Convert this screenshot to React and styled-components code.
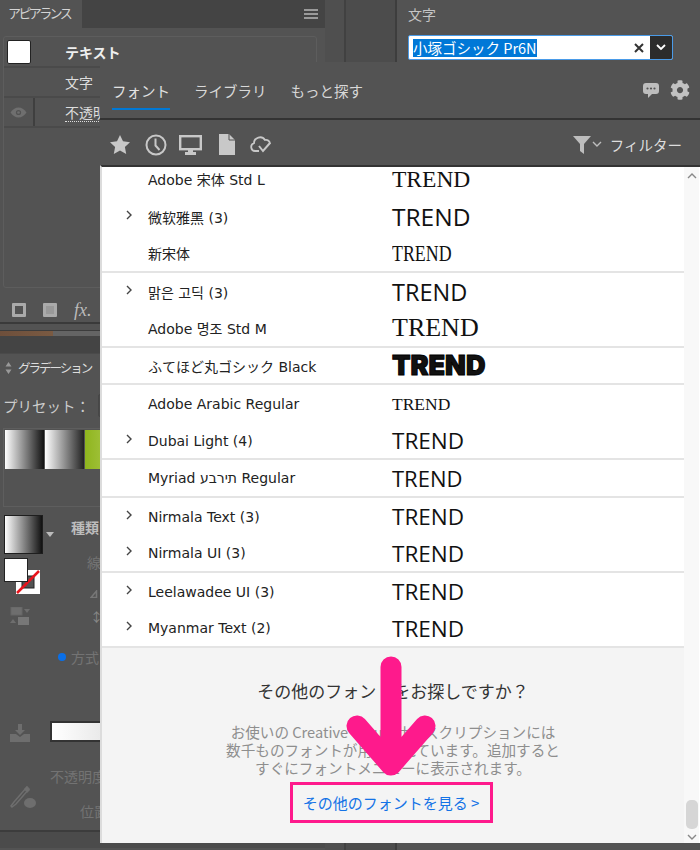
import React from "react";
import styled, { createGlobalStyle } from "styled-components";
import { FaCog } from "react-icons/fa";

const UI = '"Noto Sans CJK JP", "Noto Sans", sans-serif';
const Global = createGlobalStyle`
  html, body { margin: 0; padding: 0; background: #535353; }
  * { box-sizing: border-box; }
`;

const Page = styled.div`
  position: relative; width: 700px; height: 850px; overflow: hidden;
  display: flex; background: #535353; font-family: ${UI}; color: #ddd;
`;
const LeftColumn = styled.div`width: 325px; flex: none; display: flex; flex-direction: column;`;
const Gutter = styled.div`width: 21px; flex: none; background: #4f4f4f; border-right: 2px solid #414141;`;
const MiddleColumn = styled.div`width: 51px; flex: none; background: #4c4c4c; border-right: 2px solid #3d3d3d;`;
const RightColumn = styled.div`flex: 1; padding: 3px 27px 0 11px;`;

const Appearance = styled.section`height: 324px; display: flex; flex-direction: column; border-bottom: 2px solid #3a3a3a;`;
const TabBar = styled.div`height: 28px; flex: none; display: flex; background: #444; justify-content: space-between; align-items: center;`;
const Tab = styled.div`width: 82px; height: 28px; background: #535353; font-size: 13px; letter-spacing: -2.6px; line-height: 25px; padding-left: 8px; color: #d4d4d4; white-space: nowrap;`;
const Menu = styled.div`width: 14px; height: 10px; margin-right: 7px; border-top: 2px solid #9a9a9a; border-bottom: 2px solid #9a9a9a; position: relative;
  &::after { content: ""; display: block; height: 2px; margin-top: 2px; background: #9a9a9a; }`;
const Frame = styled.div`flex: 1; margin: 8px 8px 10px 3px; border: 1px solid #5d5d5d; border-radius: 3px;`;
const ItemRow = styled.div`height: ${p => p.$h}px; display: flex; align-items: center; border-bottom: 2px solid #4a4a4a; position: relative;`;
const WhiteSwatch = styled.div`width: 24px; height: 24px; margin-left: 3px; background: #fff; border: 1px solid #222; border-radius: 2px; flex: none;`;
const ItemLabel = styled.div`position: absolute; left: 61px; font-size: 14px; font-weight: ${p => p.$bold ? 700 : 400}; color: ${p => p.$bold ? "#eee" : "#ddd"};
  ${p => p.$dotted && "border-bottom: 1px dotted #ddd; line-height: 18px;"}`;
const EyeCell = styled.div`width: 31px; height: 100%; border-right: 2px solid #3f3f3f; display: flex; align-items: center; justify-content: center; flex: none;`;
const PanelTools = styled.div`display: flex; align-items: center; gap: 17px; padding: 0 0 0 12px; height: 24px; flex: none; margin-bottom: 0;`;
const SquareTool = styled.div`width: 14px; height: 14px; border: 3px solid #aaa; background: ${p => p.$fill ? "#999" : "transparent"}; border-radius: 1px;`;
const FxTool = styled.div`font-family: "Liberation Serif", serif; font-style: italic; font-size: 18px; color: #bbb; line-height: 20px;`;

const Strip = styled.div`height: 6px; margin-top: 6px; background: linear-gradient(90deg, #6e4f3b 0, #7a5a42 53px, #646464 53px); border-top: 1px solid #3c3c3c;`;
const DarkBand = styled.div`height: 17px; background: #444; flex: none;`;

const Gradient = styled.section`flex: 1; display: flex; flex-direction: column; border-top: 1px solid #4a4a4a;`;
const GradientHead = styled.div`height: 27px; display: flex; align-items: center; gap: 5px; padding-left: 2px; font-size: 12.5px; letter-spacing: -2px; color: #ddd; white-space: nowrap;`;
const PresetRow = styled.div`height: 47px; padding-top: 2px; display: flex; align-items: center; gap: 8px; padding-left: 3px; font-size: 14.5px; color: #ccc; white-space: nowrap;`;
const PresetInput = styled.div`width: 40px; height: 23px; flex: none; background: #4a4a4a; border: 1px solid #474747; border-radius: 2px;`;
const SwatchFrame = styled.div`height: 79px; margin-left: 3px; border: 1px solid #5e5e5e; padding: 1px; display: flex; align-items: flex-start; gap: 1px;`;
const Preset = styled.div`width: 39px; height: 39px; flex: none; background: ${p => p.$bg};`;
const TypeRow = styled.div`height: 38px; margin-top: 8px; display: flex; padding-left: 4px;`;
const GradPreview = styled.div`width: 39px; height: 39px; flex: none; background: linear-gradient(90deg,#fff,#111); border: 1px solid #1e1e1e;`;
const Caret = styled.div`width: 0; height: 0; margin: 17px 0 0 3px; border: 4px solid transparent; border-top: 5px solid #bbb; border-bottom: 0;`;
const Label = styled.div`margin: ${p => p.$m}; font-size: ${p => p.$s || 14}px; font-weight: ${p => p.$w || 400}; color: ${p => p.$c || "#737373"}; white-space: nowrap; line-height: 18px;`;
const StrokeRow = styled.div`height: 38px; margin-top: 5px; display: flex; padding-left: 4px;`;
const SwatchStack = styled.div`position: relative; width: 36px; height: 36px; flex: none;`;
const FillSwatch = styled.div`position: absolute; left: 0; top: 0; width: 24px; height: 24px; background: #fff; border: 1px solid #222; z-index: 1;`;
const StrokeSwatch = styled.svg`position: absolute; left: 12px; top: 12px;`;
const SwapRow = styled.div`height: 39px; display: flex; align-items: flex-start; padding: 11px 0 0 10px; gap: 60px;`;
const StackedAngle = styled.div`display: flex; flex-direction: column; align-items: flex-start; margin-top: -17px; gap: 10px;`;
const MethodRow = styled.div`height: 82px; display: flex; align-items: flex-start; padding: 13px 0 0 58px; gap: 5px;`;
const BlueDot = styled.div`width: 8px; height: 8px; margin-top: 5px; border-radius: 50%; background: #0a6fe8; flex: none;`;
const SliderRow = styled.div`height: 46px; margin-top: 4px; padding-left: 10px; display: flex; align-items: flex-start; gap: 20px;`;
const SliderBar = styled.div`flex: 1; height: 21px; background: linear-gradient(90deg, #fff, #888 100%); border: 2px solid #333; border-right: 0;`;
const EyeDropRow = styled.div`height: 44px; display: flex; padding: 1px 0 0 10px;`;
const BottomEdge = styled.div`height: 18px; margin-top: 1px; border-top: 2px solid #3c3c3c; background: #4b4b4b;`;

const FieldCaption = styled.div`font-size: 14px; color: #c4c4c4; line-height: 22px;`;
const Combo = styled.div`margin-top: 10px; height: 25px; display: flex; align-items: stretch; background: #fff; border: 1px solid #4a9be8; border-radius: 2px; overflow: hidden;`;
const ComboText = styled.div`flex: 1; padding: 3px 0 0 4px; font-size: 14.5px; line-height: 18px;`;
const Selected = styled.span`background: #0078d7; color: #fff; display: inline-block; white-space: nowrap;`;
const ComboClear = styled.div`width: 22px; display: flex; align-items: center; justify-content: center;`;
const ComboDrop = styled.div`width: 22px; background: #2c2c2c; display: flex; align-items: center; justify-content: center;`;

const Popup = styled.div`
  position: absolute; left: 100px; top: 62px; width: 600px; height: 781px; z-index: 2;
  display: flex; flex-direction: column; background: #535353;
`;
const PopHead = styled.header`height: 58px; flex: none; display: flex; padding: 0 10px 0 12px; border-bottom: 2px solid #333; align-items: flex-start;`;
const PopTab = styled.div`margin: 17px 24px 0 0; height: 31px; font-size: 14.5px; line-height: 24px; color: ${p => p.$on ? "#e2e2e2" : "#d8d8d8"}; border-bottom: 2px solid ${p => p.$on ? "#0078d4" : "transparent"}; white-space: nowrap;`;
const HeadIcons = styled.div`margin: 18px 0 0 auto; display: flex; align-items: center; gap: 11px;`;
const Tools = styled.div`height: 45px; flex: none; display: flex; align-items: center; padding: 4px 18px 0 10px;`;
const ToolIcons = styled.div`display: flex; align-items: center; gap: 12px;`;
const FilterBox = styled.div`margin-left: auto; display: flex; align-items: center; font-size: 14.5px; color: #ddd; white-space: nowrap;`;
const Body = styled.div`flex: 1; min-height: 0; display: flex; flex-direction: column; border-top: 2px solid #333; background: #fff; border-left: 2px solid #dcdcdc; position: relative;`;
const ListArea = styled.div`flex: 1; display: flex; min-height: 0;`;
const Main = styled.div`flex: 1; display: flex; flex-direction: column; min-width: 0;`;
const RailSpace = styled.div`width: 16px; flex: none;`;
const List = styled.div`height: 481px; flex: none; overflow: hidden;`;
const Rows = styled.div`margin-top: -7px;`;
const Row = styled.div`height: 37.5px; padding-top: 1px; display: flex; align-items: center; ${p => p.$line && "border-bottom: 2px solid #e4e4e4;"}`;
const Chevron = styled.div`width: 46px; flex: none; padding-left: 23px; display: flex; align-items: center; height: 100%; padding-bottom: 4px;`;
const FontName = styled.div`width: 244px; flex: none; font-family: "DejaVu Sans", "Noto Sans CJK JP", sans-serif; font-size: 14px; color: #222; white-space: nowrap;`;
const Trend = styled.div`font-family: ${p => p.$f}; font-size: ${p => p.$s}px; font-weight: ${p => p.$w || 400}; color: #111; transform-origin: left center; transform: scaleX(${p => p.$x || 1}); white-space: nowrap; ${p => p.$stroke && "-webkit-text-stroke: 1px #000;"}`;
const Footer = styled.footer`height: 195px; flex: none; background: #f4f4f4; display: flex; flex-direction: column; align-items: center; padding-top: 30px;`;
const FooterTitle = styled.div`font-size: 17px; line-height: 25px; color: #333;`;
const FooterText = styled.div`margin-top: 20px; font-size: 14.6px; line-height: 18px; color: #8e8e8e; text-align: center; white-space: nowrap;`;
const LinkBox = styled.div`margin: 5px 4px 0 0; width: 203px; height: 41px; border: 3px solid #fe1a8c; display: flex; align-items: center; justify-content: center; font-size: 15px; color: #1473e6; white-space: nowrap;`;
const Scrollbar = styled.div`position: absolute; right: 1px; top: 0; bottom: 0; width: 15px; background: #f8f8f8; display: flex; flex-direction: column; align-items: center; justify-content: space-between; padding: 6px 0 3px;`;
const Thumb = styled.div`width: 12px; height: 29px; background: #d6d6d6; border-radius: 5px; margin-top: auto; margin-bottom: 5px;`;
const ArrowOverlay = styled.svg`position: absolute; left: 340px; top: 650px; z-index: 3; pointer-events: none;`;

const serif = '"Liberation Serif", serif';
const sans = '"Open Sans", sans-serif';
const rows = [
  { n: "Adobe 宋体 Std L", f: serif, s: 23.5 },
  { n: "微软雅黑 (3)", c: 1, f: sans, s: 24.5, w: 500 },
  { n: "新宋体", f: serif, s: 23.5, x: 0.76, line: 1 },
  { n: "맑은 고딕 (3)", c: 1, f: sans, s: 23.5 },
  { n: "Adobe 명조 Std M", f: serif, s: 26, line: 1 },
  { n: "ふてほど丸ゴシック Black", f: '"Inter", sans-serif', s: 27, w: 900, stroke: 1, line: 1 },
  { n: "Adobe Arabic Regular", f: serif, s: 17.5 },
  { n: "Dubai Light (4)", c: 1, f: sans, s: 22.5, line: 1 },
  { n: "Myriad תירבע Regular", f: sans, s: 22, line: 1 },
  { n: "Nirmala Text (3)", c: 1, f: sans, s: 22.5 },
  { n: "Nirmala UI (3)", c: 1, f: sans, s: 22.5, line: 1 },
  { n: "Leelawadee UI (3)", c: 1, f: sans, s: 22.5 },
  { n: "Myanmar Text (2)", c: 1, f: sans, s: 22.5, line: 1 },
];

const Chev = ({ d = "M2 1l4 4-4 4", c = "#444", w = 8, h = 10, sw = 1.4 }) => (
  <svg width={w} height={h} viewBox={`0 0 ${w} ${h}`}><path d={d} fill="none" stroke={c} strokeWidth={sw} /></svg>
);

export default function App() {
  return (
    <Page>
      <Global />
      <LeftColumn>
        <Appearance>
          <TabBar><Tab>アピアランス</Tab><Menu /></TabBar>
          <Frame>
            <ItemRow $h={31}><WhiteSwatch /><ItemLabel $bold>テキスト</ItemLabel></ItemRow>
            <ItemRow $h={30}><ItemLabel>文字</ItemLabel></ItemRow>
            <ItemRow $h={30}>
              <EyeCell>
                <svg width="17" height="11" viewBox="0 0 17 11"><path d="M.5 5.5C3 2 5.5.5 8.5.5s5.500 1.500 8 5c-2.500 3.500-5 5-8 5s-5.500-1.500-8-5z" fill="#6f6f6f" /><circle cx="8.500" cy="5.500" r="2.600" fill="#535353" /><circle cx="8.500" cy="5.500" r="1.300" fill="#6f6f6f" /></svg>
              </EyeCell>
              <ItemLabel $dotted>不透明度</ItemLabel>
            </ItemRow>
          </Frame>
          <PanelTools>
            <SquareTool /><SquareTool $fill /><FxTool>fx.</FxTool>
          </PanelTools>
        </Appearance>
        <Strip />
        <DarkBand />
        <Gradient>
          <GradientHead>
            <svg width="9" height="12" viewBox="0 0 9 12" style={{ flex: "none", marginLeft: 2 }}><path d="M4.500 0l3 4.500h-6zM4.500 12l-3-4.500h6z" fill="#999" /></svg>
            グラデーション
          </GradientHead>
          <PresetRow>プリセット：<PresetInput /></PresetRow>
          <SwatchFrame>
            <Preset $bg="linear-gradient(90deg,#fff,#111)" />
            <Preset $bg="linear-gradient(90deg,#fff,#222)" />
            <Preset $bg="linear-gradient(90deg,#8fb51e,#b4cf5a)" />
          </SwatchFrame>
          <TypeRow>
            <GradPreview /><Caret />
            <Label $m="3px 0 0 17px" $c="#bdbdbd" $w={700}>種類</Label>
          </TypeRow>
          <StrokeRow>
            <SwatchStack>
              <FillSwatch />
              <StrokeSwatch width="24" height="24" viewBox="0 0 24 24">
                <rect width="24" height="24" fill="#fff" />
                <rect x="6" y="6" width="12" height="12" fill="#535353" stroke="#222" />
                <path d="M1 23L23 1" stroke="#e8141c" strokeWidth="2.500" />
              </StrokeSwatch>
            </SwatchStack>
            <Label $m="-5px 0 0 47px">線</Label>
          </StrokeRow>
          <SwapRow>
            <svg width="20" height="18" viewBox="0 0 20 18" style={{ flex: "none" }}>
              <rect x="1" y="0" width="11" height="8" fill="#6e6e6e" stroke="#666" />
              <path d="M14 2h6l-3 4z" fill="#6e6e6e" />
              <rect x="8" y="10" width="11" height="8" fill="#777" />
              <path d="M0 16h6l-3-4z" fill="#6e6e6e" />
            </svg>
            <StackedAngle>
              <svg width="12" height="8" viewBox="0 0 12 8"><path d="M1 7.500L6.500 1v6.500z" fill="none" stroke="#777" strokeWidth="1.500" /></svg>
              <Label $m="0" $s={13} $c="#888">↕9</Label>
            </StackedAngle>
          </SwapRow>
          <MethodRow><BlueDot /><Label $m="0">方式</Label></MethodRow>
          <SliderRow>
            <svg width="20" height="18" viewBox="0 0 20 18" style={{ flex: "none", marginTop: 3 }}>
              <path d="M0 10h6l4 3 4-3h6v8H0z" fill="#6e6e6e" /><path d="M8 0h4v6h3l-5 5-5-5h3z" fill="#6e6e6e" />
            </svg>
            <SliderBar />
          </SliderRow>
          <Label $m="0 0 0 50px">不透明度</Label>
          <EyeDropRow>
            <svg width="26" height="24" viewBox="0 0 26 24" style={{ flex: "none" }}>
              <path d="M17 1l2 2-13 15-4 3-1-1 3-4z" fill="none" stroke="#6e6e6e" strokeWidth="1.500" />
              <path d="M14 3l3-3 3 4-3 3z" fill="#6e6e6e" />
              <ellipse cx="20" cy="17" rx="6" ry="5" fill="#6e6e6e" />
            </svg>
            <Label $m="16px 0 0 44px">位置</Label>
          </EyeDropRow>
          <BottomEdge />
        </Gradient>
      </LeftColumn>
      <Gutter />
      <MiddleColumn />
      <RightColumn>
        <FieldCaption>文字</FieldCaption>
        <Combo>
          <ComboText><Selected>小塚ゴシック Pr6N</Selected></ComboText>
          <ComboClear><Chev w={12} h={12} d="M2 2l8 8M10 2l-8 8" c="#333" sw={2} /></ComboClear>
          <ComboDrop><Chev w={10} h={7} d="M1 1l4 4 4-4" c="#fff" sw={1.8} /></ComboDrop>
        </Combo>
      </RightColumn>

      <Popup>
        <PopHead>
          <PopTab $on>フォント</PopTab>
          <PopTab>ライブラリ</PopTab>
          <PopTab>もっと探す</PopTab>
          <HeadIcons>
            <svg width="16" height="15" viewBox="0 0 16 15"><path d="M3 0h10a3 3 0 013 3v5a3 3 0 01-3 3H9l-4 4v-4H3a3 3 0 01-3-3V3a3 3 0 013-3z" fill="#bdbdbd" /><circle cx="4.500" cy="5.500" r="1.100" fill="#535353" /><circle cx="8" cy="5.500" r="1.100" fill="#535353" /><circle cx="11.500" cy="5.500" r="1.100" fill="#535353" /></svg>
            <FaCog size={20} color="#c2c2c2" />
          </HeadIcons>
        </PopHead>
        <Tools>
          <ToolIcons>
            <svg width="20" height="19" viewBox="0 0 20 19"><path d="M10 0l3 6.300 7 .9-5.100 4.800 1.300 6.900L10 15.600 3.800 18.900 5.100 12 0 7.200l7-.9z" fill="#c8c8c8" /></svg>
            <svg width="22" height="22" viewBox="0 0 22 22" style={{ marginLeft: 3 }}><circle cx="11" cy="11" r="9.500" fill="none" stroke="#c8c8c8" strokeWidth="2" /><path d="M10.500 4.500V11.500l4 4.500" fill="none" stroke="#c8c8c8" strokeWidth="2" /></svg>
            <svg width="23" height="20" viewBox="0 0 23 20"><rect x="1.200" y="1.200" width="20.600" height="13" fill="none" stroke="#c8c8c8" strokeWidth="2.400" /><path d="M9 15h5v2h3v3H6v-3h3z" fill="#c8c8c8" /></svg>
            <svg width="16" height="21" viewBox="0 0 16 21" style={{ margin: "0 3px 0 5px" }}><path d="M0 0h10l6 6v15H0z" fill="#c8c8c8" /><path d="M10 0v6h6" fill="none" stroke="#535353" /></svg>
            <svg width="23" height="18" viewBox="0 0 23 18"><path d="M9 15H5a4 4 0 01-1-7.800A6 6 0 0115 4a4 4 0 015 4" fill="none" stroke="#c8c8c8" strokeWidth="1.800" /><path d="M9 10l4 5 7-8" fill="none" stroke="#c8c8c8" strokeWidth="2" /></svg>
          </ToolIcons>
          <FilterBox>
            <svg width="18" height="18" viewBox="0 0 18 18"><path d="M0 0h18l-7 8v10l-4-3V8z" fill="#bdbdbd" /></svg>
            <span style={{ margin: "0 8px 0 1px", display: "flex" }}><Chev w={10} h={7} d="M1 1l4 4 4-4" c="#bdbdbd" sw={1.4} /></span>
            フィルター
          </FilterBox>
        </Tools>
        <Body>
          <ListArea>
            <Main>
              <List>
                <Rows>
                  {rows.map(r => (
                    <Row key={r.n} $line={r.line}>
                      <Chevron>{r.c ? <Chev /> : null}</Chevron>
                      <FontName>{r.n}</FontName>
                      <Trend $f={r.f} $s={r.s} $w={r.w} $x={r.x} $stroke={r.stroke}>TREND</Trend>
                    </Row>
                  ))}
                </Rows>
              </List>
              <Footer>
                <FooterTitle>その他のフォントをお探しですか？</FooterTitle>
                <FooterText>お使いの Creative Cloud サブスクリプションには<br />数千ものフォントが用意されています。追加すると<br />すぐにフォントメニューに表示されます。</FooterText>
                <LinkBox>その他のフォントを見る &gt;</LinkBox>
              </Footer>
            </Main>
            <RailSpace />
          </ListArea>
          <Scrollbar>
            <Chev w={10} h={6} d="M1 5l4-4 4 4" c="#888" sw={1.4} />
            <Thumb />
            <Chev w={10} h={6} d="M1 1l4 4 4-4" c="#888" sw={1.4} />
          </Scrollbar>
        </Body>
      </Popup>
      <ArrowOverlay width="100" height="140" viewBox="0 0 100 140">
        <path d="M51 17V115M17 76l34 39 34-39" fill="none" stroke="#fe1a8c" strokeWidth="21" strokeLinecap="round" strokeLinejoin="round" />
      </ArrowOverlay>
    </Page>
  );
}
